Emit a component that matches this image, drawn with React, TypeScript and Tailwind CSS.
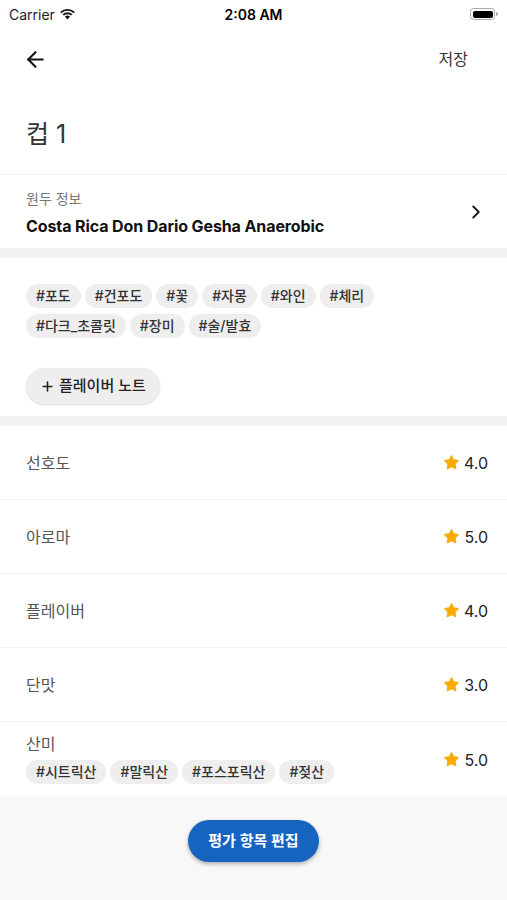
import { ArrowLeft, ChevronRight, Star, Plus } from "lucide-react";

const font = { fontFamily: 'Inter, "Noto Sans CJK KR", sans-serif' };

const flavorTags = ["#포도", "#건포도", "#꽃", "#자몽", "#와인", "#체리", "#다크_초콜릿", "#장미", "#술/발효"];
const acidTags = ["#시트릭산", "#말릭산", "#포스포릭산", "#젖산"];

const ratings = [
  { label: "선호도", score: "4.0" },
  { label: "아로마", score: "5.0" },
  { label: "플레이버", score: "4.0" },
  { label: "단맛", score: "3.0" },
];

function Chip({ text }: { text: string }) {
  return (
    <span className="h-6 px-[10px] rounded-full bg-[#eeeeee] text-[14px] font-medium text-[#333] flex items-center leading-none">
      {text}
    </span>
  );
}

function Score({ value }: { value: string }) {
  return (
    <div className="flex items-center gap-1">
      <Star size={17} className="text-[#f9ab00]" fill="#f9ab00" strokeWidth={1} />
      <span className="text-[16px] text-[#222]">{value}</span>
    </div>
  );
}

export default function App() {
  return (
    <div className="w-[507px] h-[900px] bg-white flex flex-col overflow-hidden" style={font}>
      {/* Status bar */}
      <div className="h-[28px] flex items-center justify-between px-[9px] text-[14px] text-black">
        <div className="flex items-center gap-1 w-[120px]">
          <span className="text-[#222]">Carrier</span>
          <svg width="17" height="12" viewBox="0 0 17 12">
            <path d="M8.5 11.5 L6 8.7 A3.6 3.6 0 0 1 11 8.7 Z" fill="#111" />
            <path d="M3.6 6.3 A7 7 0 0 1 13.4 6.3 L12.1 7.6 A5.2 5.2 0 0 0 4.9 7.6 Z" fill="#111" />
            <path d="M1.2 3.9 A10.4 10.4 0 0 1 15.8 3.9 L14.5 5.2 A8.6 8.6 0 0 0 2.5 5.2 Z" fill="#111" />
          </svg>
        </div>
        <span className="font-semibold text-[14px]">2:08 AM</span>
        <div className="w-[120px] flex justify-end">
          <div className="flex items-center">
            <div className="w-[25px] h-[12px] rounded-[3.5px] border border-[#aaa] p-[1.5px]">
              <div className="w-full h-full rounded-[2px] bg-black" />
            </div>
            <div className="w-[1.5px] h-[4px] bg-[#aaa] rounded-r-sm ml-[1px]" />
          </div>
        </div>
      </div>

      {/* Nav */}
      <div className="h-[62px] flex items-center justify-between pl-[23px] pr-[39px]">
        <ArrowLeft size={25} strokeWidth={2} className="text-[#111]" />
        <span className="text-[16px] text-[#333]">저장</span>
      </div>

      {/* Title */}
      <div className="h-[85px] flex items-center px-[26px] pt-[6px] border-b border-[#f2f2f2]">
        <h1 className="text-[25px] text-[#333] font-normal">컵 1</h1>
      </div>

      {/* Bean info */}
      <div className="h-[73px] flex items-center justify-between pl-[26px] pr-[20px]">
        <div className="flex flex-col gap-[12px] pt-[2px]">
          <span className="text-[14px] text-[#777] leading-none">원두 정보</span>
          <span className="text-[16px] font-bold text-[#111] tracking-[-0.1px] leading-none">
            Costa Rica Don Dario Gesha Anaerobic
          </span>
        </div>
        <ChevronRight size={22} strokeWidth={2.2} className="text-[#222]" />
      </div>

      <div className="h-[10px] bg-[#f2f2f2]" />

      {/* Flavor notes */}
      <div className="px-[26px] pt-[26px] pb-[12px] flex flex-col">
        <div className="flex flex-wrap gap-x-[4px] gap-y-[6px] w-[370px]">
          {flavorTags.map((t) => (
            <Chip key={t} text={t} />
          ))}
        </div>
        <button className="mt-[30px] self-start h-[36px] px-[14px] rounded-full bg-[#eeeeee] shadow-[0_1px_2px_rgba(0,0,0,0.15)] flex items-center gap-1 text-[15px] font-medium text-[#222]">
          <Plus size={15} strokeWidth={2.5} />
          플레이버 노트
        </button>
      </div>

      <div className="h-[10px] bg-[#f2f2f2]" />

      {/* Ratings */}
      {ratings.map((r) => (
        <div key={r.label} className="h-[74px] flex items-center justify-between pl-[26px] pr-[19px] border-b border-[#f2f2f2]">
          <span className="text-[16px] text-[#555]">{r.label}</span>
          <Score value={r.score} />
        </div>
      ))}
      <div className="h-[75px] flex items-center justify-between pl-[26px] pr-[19px]">
        <div className="flex flex-col gap-[8px]">
          <span className="text-[16px] text-[#555] leading-none">산미</span>
          <div className="flex gap-[4px]">
            {acidTags.map((t) => (
              <Chip key={t} text={t} />
            ))}
          </div>
        </div>
        <Score value="5.0" />
      </div>

      {/* Bottom */}
      <div className="flex-1 bg-[#f8f8f8] flex justify-center pt-[23px]">
        <button className="h-[42px] px-[20px] rounded-full bg-[#1565c0] text-white text-[15px] font-semibold shadow-[0_2px_4px_rgba(0,0,0,0.3)]">
          평가 항목 편집
        </button>
      </div>
    </div>
  );
}
